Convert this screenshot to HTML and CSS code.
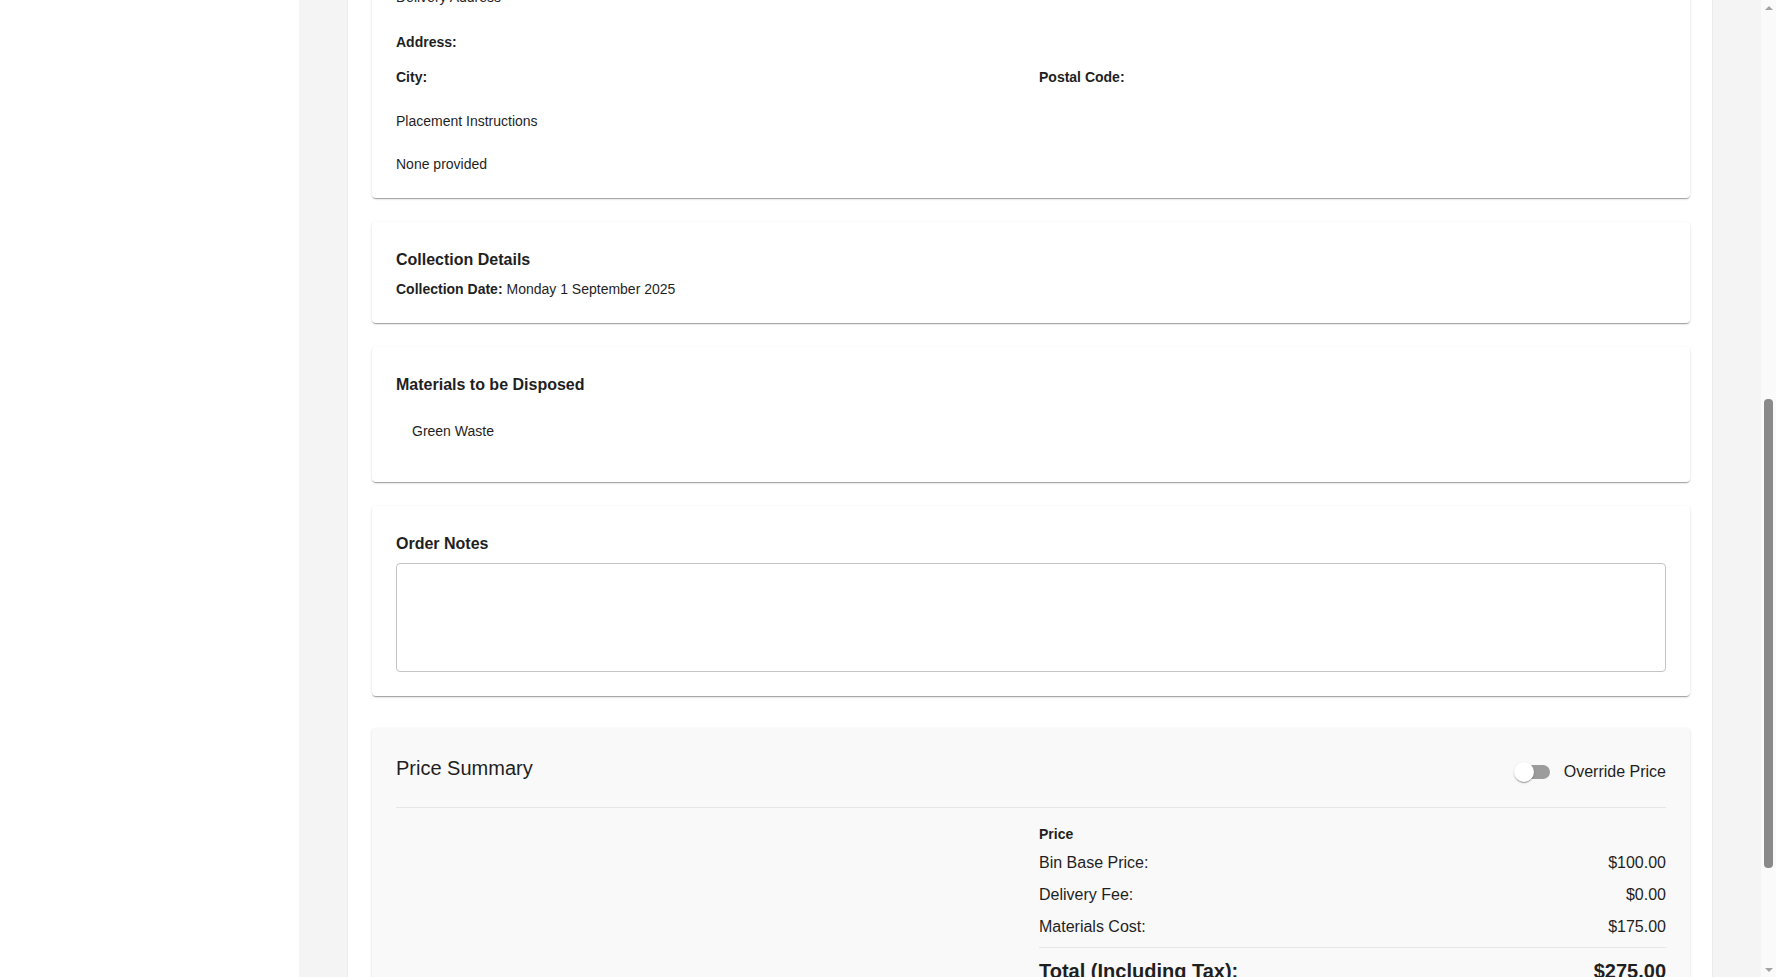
FILE: index.html
```html
<!DOCTYPE html>
<html lang="en">

<head>
  <meta charset="UTF-8">
  <meta name="viewport" content="width=device-width, initial-scale=1.0">
  <title>Order #10482 - Bin Hire Admin</title>
  <link rel="stylesheet" href="styles.css">
</head>

<body>
  <div class="layout">
    <aside class="sidebar">
      <nav class="side-nav">
        <a href="#">Dashboard</a>
        <a href="#" class="active">Orders</a>
        <a href="#">Customers</a>
        <a href="#">Bins</a>
        <a href="#">Settings</a>
      </nav>
    </aside>

    <main class="main">
      <div class="panel">
        <div class="page-head">
          <h2 class="page-title">Order #10482</h2>
          <p class="page-sub">Created Friday 22 August 2025 by Admin</p>
        </div>

        <section class="card">
          <h3 class="card-title">Customer Details</h3>
          <p class="line"><b>Name:</b> Jordan Mitchell</p>
          <p class="line"><b>Email:</b> jordan.mitchell@example.com</p>
          <p class="line"><b>Phone:</b> 0412 345 678</p>
          <p class="line"><b>Company:</b> -</p>
          <p class="line"><b>Account Type:</b> Residential</p>
        </section>

        <section class="card">
          <h3 class="card-title">Bin Details</h3>
          <p class="line"><b>Bin Size:</b> 6m³ Skip Bin</p>
          <p class="line"><b>Bin Type:</b> Marrel</p>
          <p class="line"><b>Hire Period:</b> 7 days</p>
          <p class="line"><b>Quantity:</b> 1</p>
        </section>

        <section class="card">
          <h3 class="card-title">Payment Details</h3>
          <p class="line"><b>Payment Method:</b> Card</p>
          <p class="line"><b>Payment Status:</b> Pending</p>
          <p class="line"><b>Invoice:</b> Not issued</p>
          <p class="line"><b>Reference:</b> -</p>
        </section>

        <section class="card">
          <h3 class="card-title">Delivery Details</h3>
          <p class="line gap"><b>Delivery Date:</b> Monday 25 August 2025</p>
          <p class="subheading address-head">Delivery Address</p>
          <p class="field"><b>Address:</b></p>
          <div class="field-row">
            <p class="field"><b>City:</b></p>
            <p class="field"><b>Postal Code:</b></p>
          </div>
          <p class="subheading">Placement Instructions</p>
          <p class="line">None provided</p>
        </section>

        <section class="card" id="collection">
          <h3 class="card-title">Collection Details</h3>
          <p class="line"><b>Collection Date:</b> Monday 1 September 2025</p>
        </section>

        <section class="card">
          <h3 class="card-title">Materials to be Disposed</h3>
          <ul class="materials">
            <li>Green Waste</li>
          </ul>
        </section>

        <section class="card">
          <h3 class="card-title">Order Notes</h3>
          <textarea class="notes" aria-label="Order notes"></textarea>
        </section>

        <section class="card card-summary">
          <header class="summary-head">
            <h3 class="summary-title">Price Summary</h3>
            <label class="switch">
              <input type="checkbox" class="switch-input">
              <span class="switch-track"><span class="switch-thumb"></span></span>
              Override Price
            </label>
          </header>
          <div class="summary-body">
            <div></div>
            <div class="prices">
              <p class="prices-label">Price</p>
              <div class="price-row"><span>Bin Base Price:</span><span>$100.00</span></div>
              <div class="price-row"><span>Delivery Fee:</span><span>$0.00</span></div>
              <div class="price-row"><span>Materials Cost:</span><span>$175.00</span></div>
              <div class="price-row total"><span>Total (Including Tax):</span><span>$275.00</span></div>
            </div>
          </div>
        </section>

        <div class="actions">
          <button class="btn">Back to Orders</button>
          <button class="btn btn-primary">Save Changes</button>
        </div>
      </div>
    </main>
  </div>

  <div class="scrollbar" aria-hidden="true">
    <span class="scroll-arrow up"></span>
    <div class="scroll-track"><span class="scroll-thumb"></span></div>
    <span class="scroll-arrow down"></span>
  </div>

  <script>
    // Open the order scrolled down to the collection / pricing part
    const collection = document.querySelector('#collection');
    scrollTo(0, collection.getBoundingClientRect().top + scrollY - 222);

    // Keep the page scrollbar thumb in sync with the scroll position
    const track = document.querySelector('.scroll-track');
    const thumb = document.querySelector('.scroll-thumb');
    function syncThumb() {
      const doc = document.documentElement;
      const h = track.clientHeight;
      thumb.style.height = `${h * innerHeight / doc.scrollHeight}px`;
      thumb.style.top = `${h * scrollY / doc.scrollHeight}px`;
    }
    addEventListener('scroll', syncThumb);
    addEventListener('resize', syncThumb);
    syncThumb();
  </script>
</body>

</html>
```

FILE: styles.css
```css
* {
  box-sizing: border-box;
}

body {
  margin: 0;
  font-family: "Liberation Sans", Arial, sans-serif;
  font-size: 14px;
  line-height: 20px;
  color: #1f1f1f;
  background: #f4f4f4;
}

.layout {
  display: grid;
  grid-template-columns: 299px 1fr;
  min-height: 100vh;
  margin-right: 15px;
}

.sidebar {
  background: #fff;
}

.side-nav {
  display: flex;
  flex-direction: column;
  padding: 24px 16px;
  gap: 4px;
}

.side-nav a {
  color: #1f1f1f;
  text-decoration: none;
  padding: 10px 16px;
  border-radius: 4px;
}

.side-nav a.active {
  background: #f0f0f0;
  font-weight: 700;
}

.main {
  padding: 0 48px;
}

.panel {
  background: #fff;
  border-inline: 1px solid #ebebeb;
  padding: 24px 22px 100px 24px;
  display: flex;
  flex-direction: column;
  gap: 24px;
}

.page-head {
  margin-bottom: 16px;
}

.page-title {
  margin: 0 0 4px;
  font-size: 24px;
  line-height: 32px;
  font-weight: 400;
}

.page-sub {
  margin: 0;
  color: #666;
}

.card {
  background: #fff;
  border-radius: 4px;
  padding: 24px;
  box-shadow: 0 2px 1px -1px rgb(0 0 0 / 20%), 0 1px 1px 0 rgb(0 0 0 / 14%), 0 1px 3px 0 rgb(0 0 0 / 12%);
}

.card-title {
  margin: 2px 0 7px;
  font-size: 16px;
  line-height: 24px;
  font-weight: 700;
}

.card p {
  margin: 0;
}

.line.gap {
  margin-bottom: 16px;
}

.subheading {
  margin: 0 0 23px !important;
}

.subheading.address-head {
  margin-bottom: 25px !important;
}

.field {
  margin: 0 0 15px !important;
}

.field-row {
  display: grid;
  grid-template-columns: 1fr 1fr;
  gap: 16px;
  margin-bottom: 24px;
}

.field-row .field {
  margin: 0 !important;
}

.materials {
  list-style: none;
  margin: 0;
  padding: 8px 0;
}

.materials li {
  padding: 9px 16px;
}

.notes {
  display: block;
  width: 100%;
  height: 109px;
  border: 1px solid #c4c4c4;
  border-radius: 4px;
  padding: 8px 12px;
  font: inherit;
  resize: none;
}

.card-summary {
  background: #f9f9f9;
  margin-top: 8px;
}

.summary-head {
  display: flex;
  justify-content: space-between;
  align-items: flex-start;
  padding-bottom: 15px;
  border-bottom: 1px solid #e6e6e6;
}

.summary-title {
  margin: 0;
  font-size: 20px;
  line-height: 32px;
  font-weight: 400;
}

.switch {
  display: flex;
  align-items: center;
  height: 40px;
  gap: 14px;
  font-size: 16px;
  cursor: pointer;
}

.switch-input {
  position: absolute;
  opacity: 0;
  pointer-events: none;
}

.switch-track {
  position: relative;
  width: 34px;
  height: 14px;
  border-radius: 7px;
  background: #9c9c9c;
}

.switch-thumb {
  position: absolute;
  left: -2px;
  top: -3px;
  width: 20px;
  height: 20px;
  border-radius: 50%;
  background: #fff;
  box-shadow: 0 2px 1px -1px rgb(0 0 0 / 20%), 0 1px 1px 0 rgb(0 0 0 / 14%), 0 1px 3px 0 rgb(0 0 0 / 12%);
}

.summary-body {
  display: grid;
  grid-template-columns: 1fr 1fr;
  gap: 16px;
  padding-top: 16px;
}

.prices {
  display: flex;
  flex-direction: column;
  gap: 8px;
}

.prices-label {
  font-weight: 700;
  margin-bottom: -1px !important;
}

.price-row {
  display: flex;
  justify-content: space-between;
  font-size: 16px;
  line-height: 24px;
}

.price-row.total {
  font-size: 20px;
  line-height: 32px;
  font-weight: 700;
  border-top: 1px solid #e6e6e6;
  padding-top: 7px;
}

.actions {
  display: flex;
  justify-content: flex-end;
  gap: 12px;
}

.btn {
  font: inherit;
  font-weight: 700;
  text-transform: uppercase;
  padding: 8px 22px;
  border: 1px solid #c4c4c4;
  border-radius: 4px;
  background: #fff;
  color: #1f1f1f;
}

.btn-primary {
  background: #1976d2;
  border-color: #1976d2;
  color: #fff;
}

/* page scrollbar, drawn on top of the right edge */
.scrollbar {
  position: fixed;
  top: 0;
  right: 0;
  width: 15px;
  height: 100vh;
  background: #fafafa;
  display: flex;
  flex-direction: column;
}

.scroll-arrow {
  flex: 0 0 15px;
  display: flex;
  align-items: center;
  justify-content: center;
}

.scroll-arrow::before {
  content: "";
  border-inline: 4px solid transparent;
}

.scroll-arrow.up::before {
  border-bottom: 4px solid #a3a3a3;
}

.scroll-arrow.down::before {
  border-top: 4px solid #a3a3a3;
}

.scroll-track {
  position: relative;
  flex: 1;
}

.scroll-thumb {
  position: absolute;
  left: 3px;
  right: 3px;
  border-radius: 4px;
  background: #8a8a8a;
}
```
